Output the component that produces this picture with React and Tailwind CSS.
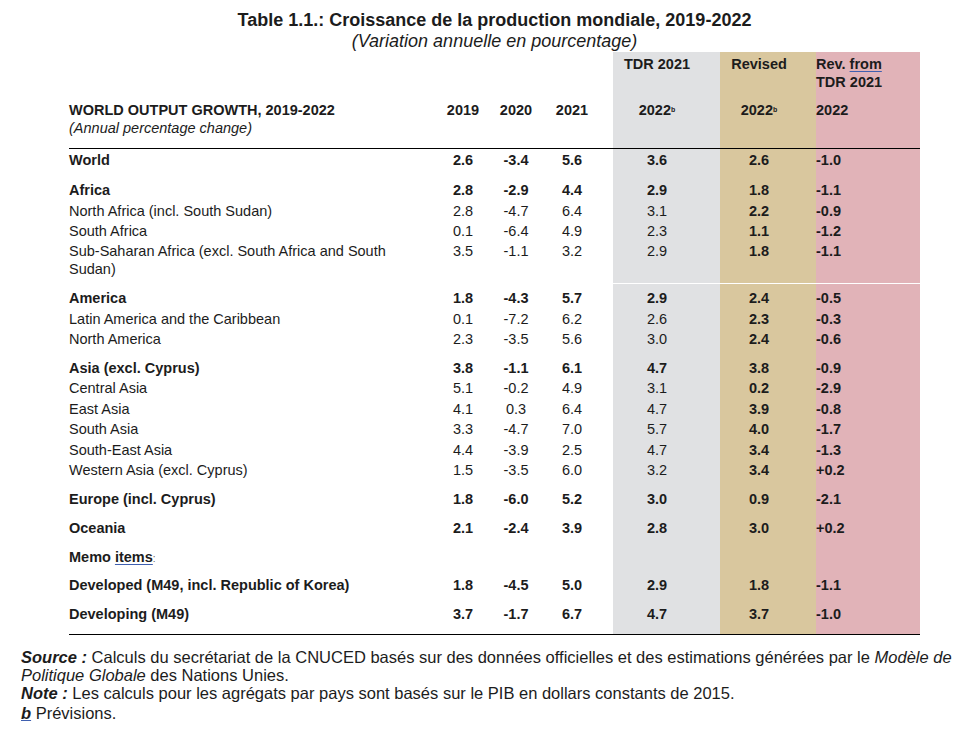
import React from "react";

const COLS = "grid grid-cols-[367px_54px_52px_60px_11px_107px_96px_104px]";

const rows = [
  { label: "World", v: ["2.6", "-3.4", "5.6", "3.6", "2.6", "-1.0"], b: true, h: "h-[30px]", pt: "pt-[2px]" },
  { label: "Africa", v: ["2.8", "-2.9", "4.4", "2.9", "1.8", "-1.1"], b: true, h: "h-[21px]", pt: "pt-[2px]" },
  { label: "North Africa (incl. South Sudan)", v: ["2.8", "-4.7", "6.4", "3.1", "2.2", "-0.9"], h: "h-[20px]", pt: "pt-[2px]" },
  { label: "South Africa", v: ["0.1", "-6.4", "4.9", "2.3", "1.1", "-1.2"], h: "h-[20px]", pt: "pt-[2px]" },
  { label: "Sub-Saharan Africa (excl. South Africa and South Sudan)", v: ["3.5", "-1.1", "3.2", "2.9", "1.8", "-1.1"], h: "h-[43px]", pt: "pt-[2px]", sep: true },
  { label: "America", v: ["1.8", "-4.3", "5.7", "2.9", "2.4", "-0.5"], b: true, h: "h-[24px]", pt: "pt-[5px]" },
  { label: "Latin America and the Caribbean", v: ["0.1", "-7.2", "6.2", "2.6", "2.3", "-0.3"], h: "h-[20px]", pt: "pt-[2px]" },
  { label: "North America", v: ["2.3", "-3.5", "5.6", "3.0", "2.4", "-0.6"], h: "h-[29px]", pt: "pt-[2px]" },
  { label: "Asia (excl. Cyprus)", v: ["3.8", "-1.1", "6.1", "4.7", "3.8", "-0.9"], b: true, h: "h-[20px]", pt: "pt-[2px]" },
  { label: "Central Asia", v: ["5.1", "-0.2", "4.9", "3.1", "0.2", "-2.9"], h: "h-[21px]", pt: "pt-[2px]" },
  { label: "East Asia", v: ["4.1", "0.3", "6.4", "4.7", "3.9", "-0.8"], h: "h-[20px]", pt: "pt-[2px]" },
  { label: "South Asia", v: ["3.3", "-4.7", "7.0", "5.7", "4.0", "-1.7"], h: "h-[21px]", pt: "pt-[2px]" },
  { label: "South-East Asia", v: ["4.4", "-3.9", "2.5", "4.7", "3.4", "-1.3"], h: "h-[20px]", pt: "pt-[2px]" },
  { label: "Western Asia (excl. Cyprus)", v: ["1.5", "-3.5", "6.0", "3.2", "3.4", "+0.2"], h: "h-[29px]", pt: "pt-[2px]" },
  { label: "Europe (incl. Cyprus)", v: ["1.8", "-6.0", "5.2", "3.0", "0.9", "-2.1"], b: true, h: "h-[29px]", pt: "pt-[2px]" },
  { label: "Oceania", v: ["2.1", "-2.4", "3.9", "2.8", "3.0", "+0.2"], b: true, h: "h-[29px]", pt: "pt-[2px]" },
  { memo: true, v: ["", "", "", "", "", ""], b: true, h: "h-[28px]", pt: "pt-[2px]" },
  { label: "Developed (M49, incl. Republic of Korea)", v: ["1.8", "-4.5", "5.0", "2.9", "1.8", "-1.1"], b: true, h: "h-[29px]", pt: "pt-[2px]" },
  { label: "Developing (M49)", v: ["3.7", "-1.7", "6.7", "4.7", "3.7", "-1.0"], b: true, h: "h-[31px]", pt: "pt-[2px]" },
];

function Row({ r }) {
  const w = r.b ? "font-bold" : "font-normal";
  return (
    <>
      <div className={`${COLS} ${r.h} text-[14.5px] leading-[18px]`}>
        <div className={`${r.pt} ${w} pr-[30px]`}>
          {r.memo ? (
            <span>
              Memo <span className="underline decoration-[#4060b0] underline-offset-2">items</span>
              <span className="font-normal text-[10px] text-[#666]">:</span>
            </span>
          ) : (
            r.label
          )}
        </div>
        <div className={`${r.pt} ${w} text-center`}>{r.v[0]}</div>
        <div className={`${r.pt} ${w} text-center`}>{r.v[1]}</div>
        <div className={`${r.pt} ${w} text-center`}>{r.v[2]}</div>
        <div />
        <div className={`${r.pt} ${w} text-center pr-[19px] bg-[#e0e1e3]`}>{r.v[3]}</div>
        <div className={`${r.pt} font-bold text-center pr-[18px] bg-[#d9c79e]`}>{r.v[4]}</div>
        <div className={`${r.pt} font-bold text-left bg-[#e1b3b8]`}>{r.v[5]}</div>
      </div>
      {r.sep && <div className="h-px bg-white" />}
    </>
  );
}

export default function App() {
  return (
    <div className="w-[974px] h-[730px] bg-white text-[#1c1c1c] font-['Liberation_Sans',Arial,sans-serif] overflow-hidden">
      <div className="ml-[69px] w-[851px]">
        <div className="h-[52px] pt-[9px] text-center text-[18px]">
          <div className="font-bold leading-[22px]">Table 1.1.: Croissance de la production mondiale, 2019-2022</div>
          <div className="italic leading-[21px]">(Variation annuelle en pourcentage)</div>
        </div>

        <div className={`${COLS} h-[96px] text-[14.5px] leading-[18px]`}>
          <div className="pt-[49px]">
            <div className="font-bold">WORLD OUTPUT GROWTH, 2019-2022</div>
            <div className="italic">(Annual percentage change)</div>
          </div>
          <div className="pt-[49px] font-bold text-center">2019</div>
          <div className="pt-[49px] font-bold text-center">2020</div>
          <div className="pt-[49px] font-bold text-center">2021</div>
          <div />
          <div className="pt-[3px] font-bold text-center pr-[19px] bg-[#e0e1e3]">
            <div>TDR 2021</div>
            <div className="mt-[28px]">
              2022<sup className="text-[7px]">b</sup>
            </div>
          </div>
          <div className="pt-[3px] font-bold text-center pr-[18px] bg-[#d9c79e]">
            <div>Revised</div>
            <div className="mt-[28px]">
              2022<sup className="text-[7px]">b</sup>
            </div>
          </div>
          <div className="pt-[3px] font-bold text-left bg-[#e1b3b8]">
            <div>
              Rev. <span className="underline decoration-[#4060b0] underline-offset-2">from</span>
            </div>
            <div>TDR 2021</div>
            <div className="mt-[10px]">2022</div>
          </div>
        </div>
        <div className="h-px bg-black" />

        {rows.map((r, i) => (
          <Row key={i} r={r} />
        ))}
        <div className="h-px bg-black" />
      </div>

      <div className="ml-[21px] w-[950px] mt-[13px] text-[16.5px] leading-[18px]">
        <p>
          <span className="font-bold italic">Source :</span> Calculs du secrétariat de la CNUCED basés sur des données
          officielles et des estimations générées par le <span className="italic">Modèle de Politique Globale</span> des
          Nations Unies.
        </p>
        <p>
          <span className="font-bold italic">Note :</span> Les calculs pour les agrégats par pays sont basés sur le PIB en
          dollars constants de 2015.
        </p>
        <p className="mt-[2px]">
          <span className="font-bold italic underline decoration-[#4060b0]">b</span> Prévisions.
        </p>
      </div>
    </div>
  );
}
